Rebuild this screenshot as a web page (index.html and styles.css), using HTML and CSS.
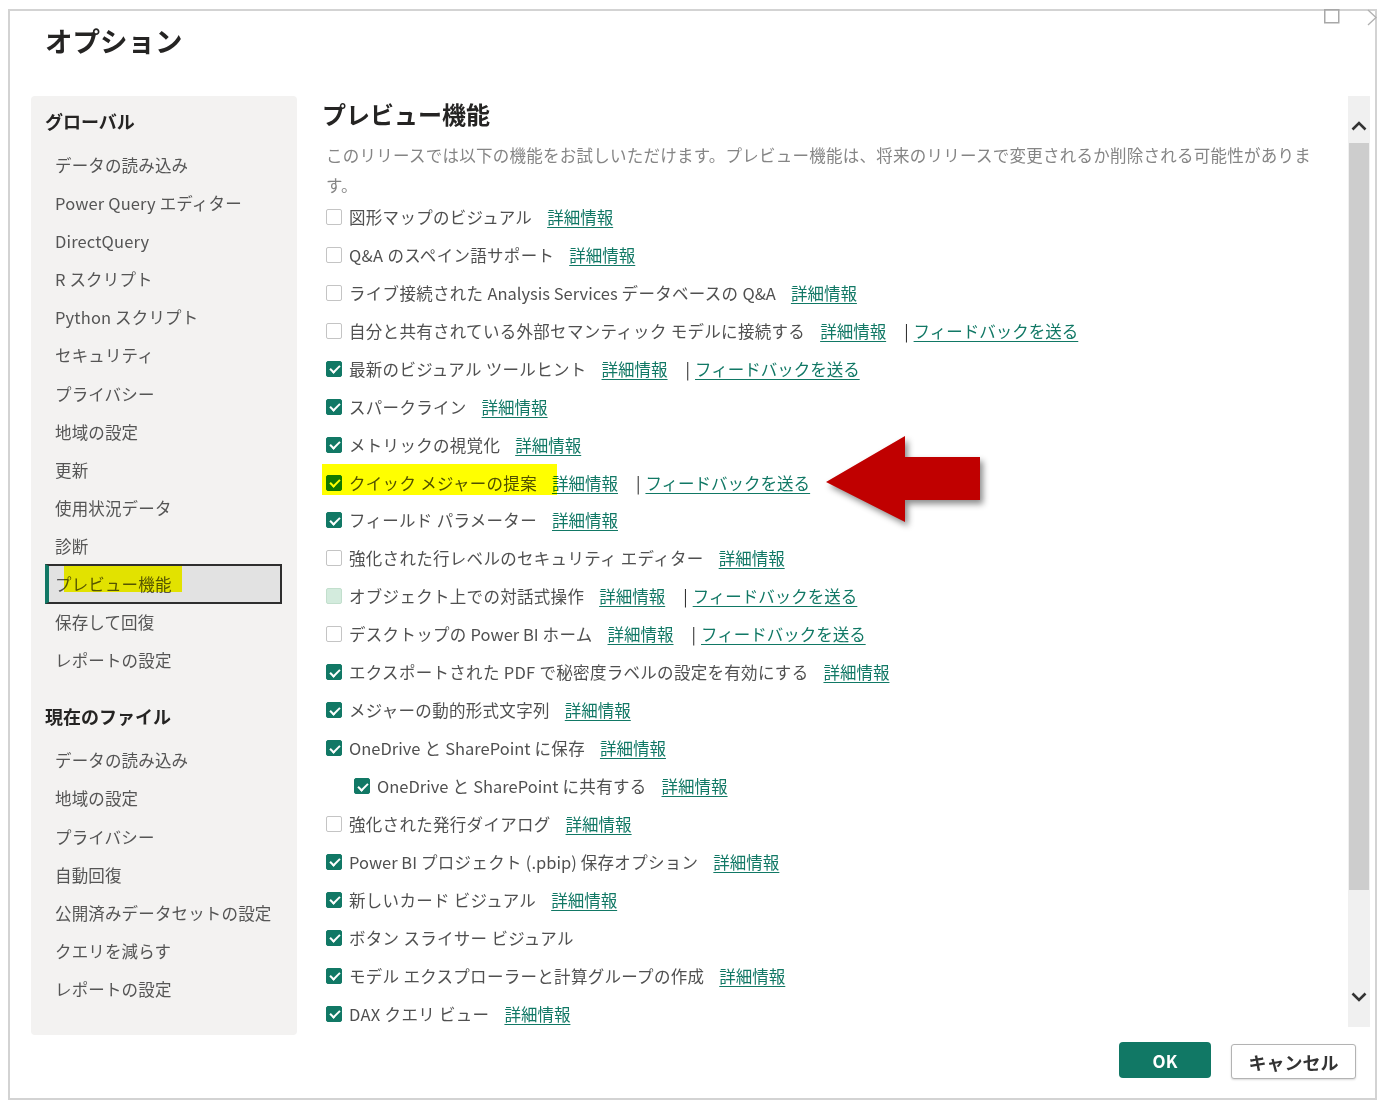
FILE: index.html
```html
<!DOCTYPE html>
<html lang="ja">
<head>
<meta charset="utf-8">
<title>オプション</title>
<link rel="stylesheet" href="styles.css">
</head>
<body>
<div class="dialog">
  <div class="title">オプション</div>
  <div class="content">
    <nav class="sidebar">
      <div class="side-h">グローバル</div>
      <div class="side-item">データの読み込み</div>
      <div class="side-item">Power Query エディター</div>
      <div class="side-item">DirectQuery</div>
      <div class="side-item">R スクリプト</div>
      <div class="side-item">Python スクリプト</div>
      <div class="side-item">セキュリティ</div>
      <div class="side-item">プライバシー</div>
      <div class="side-item">地域の設定</div>
      <div class="side-item">更新</div>
      <div class="side-item">使用状況データ</div>
      <div class="side-item">診断</div>
      <div class="side-item sel">プレビュー機能<span class="hl-side"></span></div>
      <div class="side-item">保存して回復</div>
      <div class="side-item">レポートの設定</div>
      <div class="side-h second">現在のファイル</div>
      <div class="side-item">データの読み込み</div>
      <div class="side-item">地域の設定</div>
      <div class="side-item">プライバシー</div>
      <div class="side-item">自動回復</div>
      <div class="side-item">公開済みデータセットの設定</div>
      <div class="side-item">クエリを減らす</div>
      <div class="side-item">レポートの設定</div>
    </nav>
    <div class="main">
      <div class="panel">
        <h2>プレビュー機能</h2>
        <p class="desc">このリリースでは以下の機能をお試しいただけます。プレビュー機能は、将来のリリースで変更されるか削除される可能性があります。</p>
        <div class="rows">
          <div class="row"><span class="cb"></span><span class="lbl">図形マップのビジュアル</span><a class="link">詳細情報</a></div>
          <div class="row"><span class="cb"></span><span class="lbl">Q&amp;A のスペイン語サポート</span><a class="link">詳細情報</a></div>
          <div class="row"><span class="cb"></span><span class="lbl">ライブ接続された <span class="en">Analysis Services</span> データベースの <span class="en">Q&amp;A</span></span><a class="link">詳細情報</a></div>
          <div class="row"><span class="cb"></span><span class="lbl">自分と共有されている外部セマンティック モデルに接続する</span><a class="link">詳細情報</a><span class="sep">|</span><a class="link fb">フィードバックを送る</a></div>
          <div class="row"><span class="cb on"></span><span class="lbl">最新のビジュアル ツールヒント</span><a class="link">詳細情報</a><span class="sep">|</span><a class="link fb">フィードバックを送る</a></div>
          <div class="row"><span class="cb on"></span><span class="lbl">スパークライン</span><a class="link">詳細情報</a></div>
          <div class="row"><span class="cb on"></span><span class="lbl">メトリックの視覚化</span><a class="link">詳細情報</a></div>
          <div class="row"><span class="cb on"></span><span class="lbl">クイック メジャーの提案</span><a class="link">詳細情報</a><span class="sep">|</span><a class="link fb">フィードバックを送る</a><span class="hl-row"></span></div>
          <div class="row"><span class="cb on"></span><span class="lbl">フィールド パラメーター</span><a class="link">詳細情報</a></div>
          <div class="row"><span class="cb"></span><span class="lbl">強化された行レベルのセキュリティ エディター</span><a class="link">詳細情報</a></div>
          <div class="row"><span class="cb part"></span><span class="lbl">オブジェクト上での対話式操作</span><a class="link">詳細情報</a><span class="sep">|</span><a class="link fb">フィードバックを送る</a></div>
          <div class="row"><span class="cb"></span><span class="lbl">デスクトップの <span class="en">Power BI</span> ホーム</span><a class="link">詳細情報</a><span class="sep">|</span><a class="link fb">フィードバックを送る</a></div>
          <div class="row"><span class="cb on"></span><span class="lbl">エクスポートされた PDF で秘密度ラベルの設定を有効にする</span><a class="link">詳細情報</a></div>
          <div class="row"><span class="cb on"></span><span class="lbl">メジャーの動的形式文字列</span><a class="link">詳細情報</a></div>
          <div class="row"><span class="cb on"></span><span class="lbl"><span class="en">OneDrive</span> と <span class="en">SharePoint</span> に保存</span><a class="link">詳細情報</a></div>
          <div class="row indent"><span class="cb on"></span><span class="lbl"><span class="en">OneDrive</span> と <span class="en">SharePoint</span> に共有する</span><a class="link">詳細情報</a></div>
          <div class="row"><span class="cb"></span><span class="lbl">強化された発行ダイアログ</span><a class="link">詳細情報</a></div>
          <div class="row"><span class="cb on"></span><span class="lbl"><span class="en">Power BI</span> プロジェクト <span class="en">(.pbip)</span> 保存オプション</span><a class="link">詳細情報</a></div>
          <div class="row"><span class="cb on"></span><span class="lbl">新しいカード ビジュアル</span><a class="link">詳細情報</a></div>
          <div class="row"><span class="cb on"></span><span class="lbl">ボタン スライサー ビジュアル</span></div>
          <div class="row"><span class="cb on"></span><span class="lbl">モデル エクスプローラーと計算グループの作成</span><a class="link">詳細情報</a></div>
          <div class="row"><span class="cb on"></span><span class="lbl">DAX クエリ ビュー</span><a class="link">詳細情報</a></div>
        </div>
      </div>
      <div class="scrollbar">
        <div class="sb-up"><svg width="16" height="10" viewBox="0 0 16 10"><polyline points="1.5,8.5 8,2 14.5,8.5" fill="none" stroke="#333" stroke-width="2.6"/></svg></div>
        <div class="sb-thumb"></div>
        <div class="sb-space"></div>
        <div class="sb-down"><svg width="16" height="10" viewBox="0 0 16 10"><polyline points="1.5,1.5 8,8 14.5,1.5" fill="none" stroke="#333" stroke-width="2.6"/></svg></div>
      </div>
    </div>
  </div>
  <div class="footer">
    <button class="btn btn-ok">OK</button>
    <button class="btn btn-cancel">キャンセル</button>
  </div>
</div>
<svg class="chrome" width="60" height="20" viewBox="0 0 60 20">
  <rect x="2.75" y="3.75" width="14" height="13" fill="none" stroke="#a8a8a8" stroke-width="1.5"/>
  <polyline points="46,4 54,11.5 46,19" fill="none" stroke="#b0b0b0" stroke-width="1.3"/>
</svg>
<svg class="arrow" width="190" height="120" viewBox="0 0 190 120">
  <polygon points="11,57 90,11 90,32 165,32 165,75 90,75 90,97" fill="#c00000"/>
</svg>
</body>
</html>
```
FILE: styles.css
```css
html, body {
  margin: 0;
}
body {
  position: relative;
  width: 1383px;
  height: 1107px;
  box-sizing: border-box;
  padding: 9px 0 0 8px;
  overflow: hidden;
  background: #fff;
  font-family: "Noto Sans CJK JP", "Noto Sans", sans-serif;
  color: #555;
}
.dialog {
  width: 1369px;
  height: 1091px;
  box-sizing: border-box;
  border: 2px solid #d3d3d3;
  display: flex;
  flex-direction: column;
  background: #fff;
}
.title {
  height: 85px;
  box-sizing: border-box;
  padding: 10px 0 0 35px;
  font-size: 27.5px;
  line-height: 38px;
  font-weight: 700;
  color: #252423;
  flex: none;
}
.content {
  display: flex;
  height: 939px;
  padding-left: 21px;
  flex: none;
}
.sidebar {
  width: 266px;
  flex: none;
  box-sizing: border-box;
  background: #f3f2f1;
  border-radius: 4px;
  padding-top: 10px;
}
.side-h {
  height: 30px;
  line-height: 30px;
  padding-left: 14px;
  margin-bottom: 10px;
  font-size: 18px;
  font-weight: 700;
  color: #252423;
}
.side-h.second {
  margin-top: 22px;
}
.side-item {
  width: 237px;
  height: 38.1px;
  line-height: 38px;
  margin-left: 14px;
  padding-left: 10px;
  box-sizing: border-box;
  font-size: 16.5px;
  letter-spacing: 0.15px;
  color: #555;
  white-space: nowrap;
}
.side-item.sel {
  position: relative;
  height: 40px;
  margin-top: -1px;
  margin-bottom: -0.9px;
  line-height: 36px;
  padding-left: 6px;
  border: 2px solid #2e2e2e;
  border-left: 4px solid #117865;
  background: #e2e2e2;
}
.hl-side {
  position: absolute;
  left: 15px;
  top: 0;
  width: 118px;
  height: 26px;
  background: #ffff00;
  mix-blend-mode: multiply;
}
.main {
  flex: 1;
  display: flex;
  margin-left: 25px;
}
.panel {
  flex: 1;
  overflow: hidden;
}
.panel h2 {
  margin: 1px 0 0;
  font-size: 24px;
  line-height: 34px;
  font-weight: 700;
  color: #252423;
}
.desc {
  margin: 9px 0 -2px 4px;
  width: 1000px;
  font-size: 16.5px;
  letter-spacing: 0.25px;
  line-height: 30px;
  color: #858585;
}
.row {
  position: relative;
  height: 37.95px;
  display: flex;
  align-items: center;
  padding-left: 4px;
  font-size: 16.5px;
  color: #505050;
  white-space: nowrap;
}
.row.indent {
  padding-left: 32px;
}
.lbl {
  letter-spacing: 0.3px;
}
.en {
  letter-spacing: 0;
}
.cb {
  position: relative;
  width: 16px;
  height: 16px;
  flex: none;
  box-sizing: border-box;
  margin-right: 7px;
  border: 1px solid #c4c4c4;
  border-radius: 2px;
  background: #fff;
}
.cb.on {
  background: #117865;
  border-color: #117865;
}
.cb.on::after {
  content: "";
  position: absolute;
  left: 4.5px;
  top: 1.5px;
  width: 4px;
  height: 8px;
  border: solid #fff;
  border-width: 0 2px 2px 0;
  transform: rotate(45deg);
}
.cb.part {
  background: #d3ebdd;
  border-color: #c2dfcd;
}
.link {
  margin-left: 15px;
  color: #117865;
  text-decoration: underline;
  text-decoration-thickness: 1px;
  text-underline-offset: 3px;
  cursor: pointer;
}
.link.fb {
  margin-left: 5px;
}
.sep {
  margin-left: 18px;
  color: #333;
}
.hl-row {
  position: absolute;
  left: -2px;
  top: 0;
  width: 237px;
  height: 31px;
  background: #ffff00;
  mix-blend-mode: multiply;
}
.scrollbar {
  width: 22px;
  height: 931px;
  flex: none;
  margin-right: 5px;
  background: #f0f0f0;
  display: flex;
  flex-direction: column;
}
.sb-up {
  height: 47px;
  display: flex;
  justify-content: center;
  align-items: flex-end;
  padding-bottom: 12px;
  box-sizing: border-box;
}
.sb-thumb {
  height: 747px;
  margin: 0 1px;
  background: #cdcdcd;
}
.sb-space {
  flex: 1;
}
.sb-down {
  display: flex;
  justify-content: center;
  padding-bottom: 25px;
}
.footer {
  display: flex;
  justify-content: flex-end;
  align-items: flex-start;
  gap: 20px;
  padding-right: 19px;
  margin-top: 7px;
}
.btn {
  font-family: "Noto Sans CJK JP", "Noto Sans", sans-serif;
  font-weight: 700;
  padding: 0;
  cursor: pointer;
}
.btn-ok {
  width: 92px;
  height: 36px;
  border: none;
  border-radius: 4px;
  background: #117865;
  color: #fff;
  font-size: 17px;
}
.btn-cancel {
  width: 125px;
  height: 35px;
  margin-top: 2px;
  border: 1px solid #b3b3b3;
  border-radius: 3px;
  background: #fff;
  color: #333;
  font-size: 18px;
  box-shadow: 0 1px 2px rgba(0, 0, 0, 0.15);
}
.chrome {
  position: absolute;
  left: 1322px;
  top: 6px;
}
.arrow {
  position: absolute;
  left: 815px;
  top: 425px;
  filter: drop-shadow(3px 4px 3px rgba(0, 0, 0, 0.45));
}
```
